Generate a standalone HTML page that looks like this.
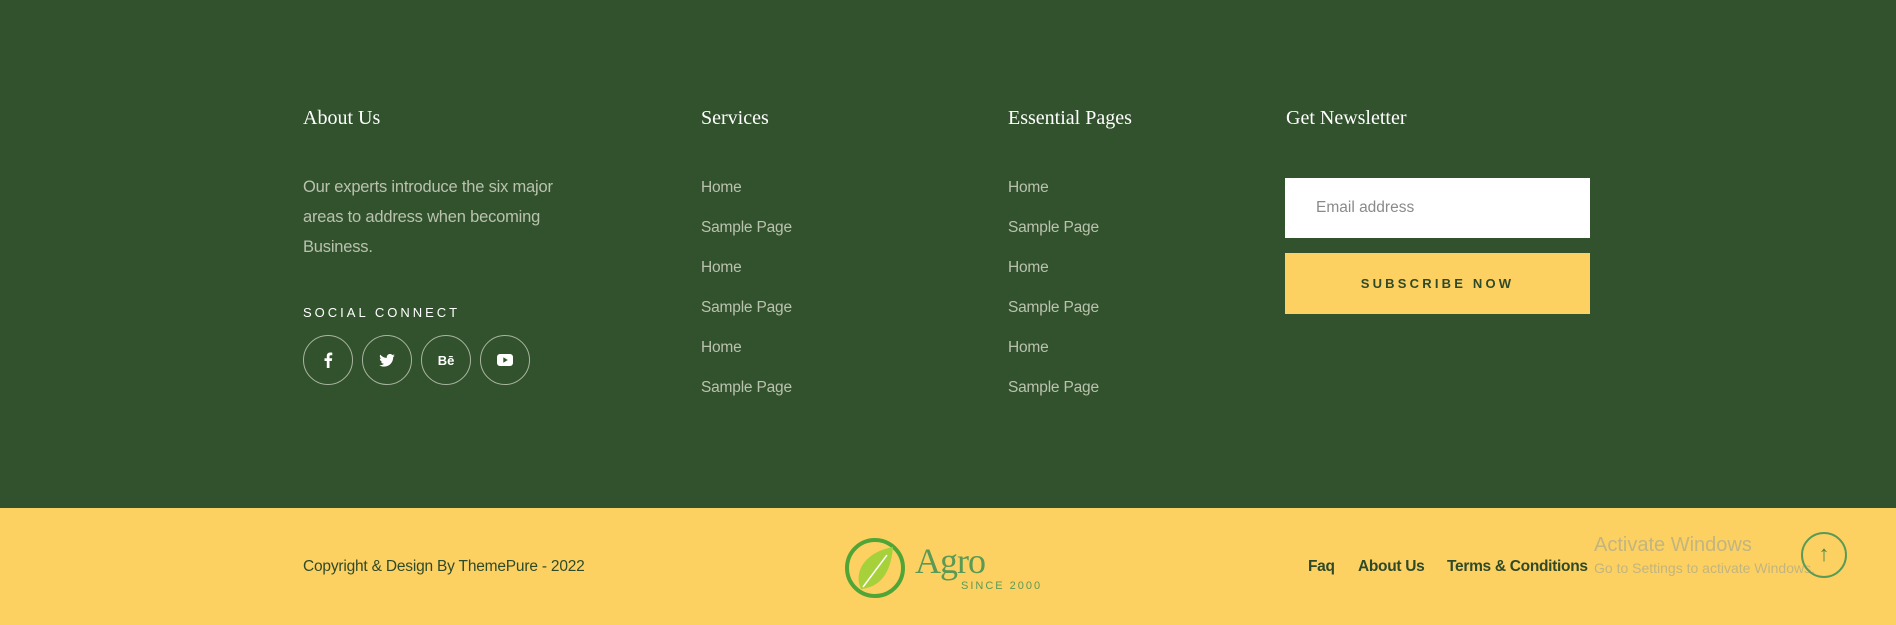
<!DOCTYPE html>
<html><head><meta charset="utf-8"><style>
*{margin:0;padding:0;box-sizing:border-box}
body{width:1896px;height:625px;overflow:hidden;font-family:"Liberation Sans",sans-serif;position:relative;background:#32522d}
.top{position:absolute;left:0;top:0;width:1896px;height:508px;background:#32522d}
.bot{position:absolute;left:0;top:508px;width:1896px;height:117px;background:#fdd062}
.a{position:absolute;white-space:nowrap}
h3{position:absolute;font-family:"Liberation Serif",serif;font-weight:normal;font-size:20px;color:#fff;top:107px}
.p{color:#b9c2ad;font-size:16.5px;line-height:30px;top:172px;left:303px;letter-spacing:-.2px}
.lk{color:#b9c2ad;font-size:15.5px;letter-spacing:-.2px}
.c{position:absolute;top:335px;width:50px;height:50px;border:1px solid #a9b59f;border-radius:50%;display:flex;align-items:center;justify-content:center;color:#fff;font-size:13px;font-weight:bold}
.b{position:absolute;top:558px;font-size:15.5px;font-weight:bold;color:#2f4a28;letter-spacing:-.3px}
</style></head><body>
<div class="top"></div><div class="bot"></div>
<h3 style="left:303px">About Us</h3>
<h3 style="left:701px">Services</h3>
<h3 style="left:1008px">Essential Pages</h3>
<h3 style="left:1286px">Get Newsletter</h3>
<div class="a p">Our experts introduce the six major<br>areas to address when becoming<br>Business.</div>
<div class="a" style="left:303px;top:305px;color:#fff;font-size:13px;letter-spacing:3px">SOCIAL CONNECT</div>
<div class="c" style="left:303px"><svg width="10" height="16" viewBox="0 0 10 16"><path d="M6.5 16V9h2.3l.4-2.8H6.5V4.5c0-.8.3-1.3 1.4-1.3H9.3V.7C9 .6 8.2.5 7.2.5 5.2.5 3.8 1.7 3.8 4v2.2H1.5V9h2.3v7z" fill="#fff"/></svg></div>
<div class="c" style="left:362px"><svg width="16" height="13" viewBox="0 0 24 20"><path d="M24 2.4a9.8 9.8 0 0 1-2.8.8A4.9 4.9 0 0 0 23.3.4a9.8 9.8 0 0 1-3.1 1.2A4.9 4.9 0 0 0 11.8 6 14 14 0 0 1 1.7.9a4.9 4.9 0 0 0 1.5 6.6A4.900 4.900 0 0 1 1 6.9a4.9 4.9 0 0 0 3.9 4.8 4.900 4.900 0 0 1-2.200.1 4.900 4.900 0 0 0 4.600 3.400A9.900 9.900 0 0 1 0 17.200 14 14 0 0 0 7.500 19.400c9 0 14-7.500 14-14v-.6A10 10 0 0 0 24 2.400z" fill="#fff"/></svg></div>
<div class="c" style="left:421px">Bē</div>
<div class="c" style="left:480px"><svg width="16" height="12" viewBox="0 0 16 12"><rect x="0" y="0" width="16" height="12" rx="3" fill="#fff"/><path d="M6.3 3.3v5.4L10.8 6z" fill="#32522d"/></svg></div>
<div class="a lk" style="left:701px;top:168px;line-height:40px">Home<br>Sample Page<br>Home<br>Sample Page<br>Home<br>Sample Page</div>
<div class="a lk" style="left:1008px;top:168px;line-height:40px">Home<br>Sample Page<br>Home<br>Sample Page<br>Home<br>Sample Page</div>
<div class="a" style="left:1285px;top:178px;width:305px;height:60px;background:#fff;color:#8a8a8a;font-size:15.5px;padding:21px 0 0 31px">Email address</div>
<div class="a" style="left:1285px;top:253px;width:305px;height:61px;background:#fdd062;color:#2f4a28;font-size:13px;font-weight:bold;letter-spacing:3.2px;text-align:center;line-height:61px">SUBSCRIBE NOW</div>
<div class="a" style="left:303px;top:558px;color:#2f4a28;font-size:15.5px;letter-spacing:-.2px">Copyright &amp; Design By ThemePure - 2022</div>
<svg class="a" style="left:845px;top:537px" width="62" height="62" viewBox="0 0 62 62"><circle cx="30" cy="31" r="28" fill="none" stroke="#4fa536" stroke-width="4"/><path d="M16 52C8 35 20 15 48 10 46 35 36 50 16 52z" fill="#a6d13a"/><path d="M18 50L42 18" stroke="#fff" stroke-width="1.5"/></svg>
<div class="a" style="left:915px;top:540px;font-family:'Liberation Serif',serif;font-size:36px;color:#5a9a55;letter-spacing:-1px">Agro</div>
<div class="a" style="left:961px;top:580px;font-size:11px;color:#5a9a55;letter-spacing:2px">SINCE 2000</div>
<div class="b" style="left:1308px">Faq</div>
<div class="b" style="left:1358px">About Us</div>
<div class="b" style="left:1447px">Terms &amp; Conditions</div>
<div class="a" style="left:1594px;top:534px;font-size:20px;color:#c2b57e">Activate Windows</div>
<div class="a" style="left:1594px;top:560px;font-size:14px;color:#c2b57e">Go to Settings to activate Windows.</div>
<div class="a" style="left:1801px;top:532px;width:46px;height:46px;border:2px solid #5a9a55;border-radius:50%;color:#4a8a45;font-size:22px;text-align:center;line-height:40px">↑</div>
</body></html>
